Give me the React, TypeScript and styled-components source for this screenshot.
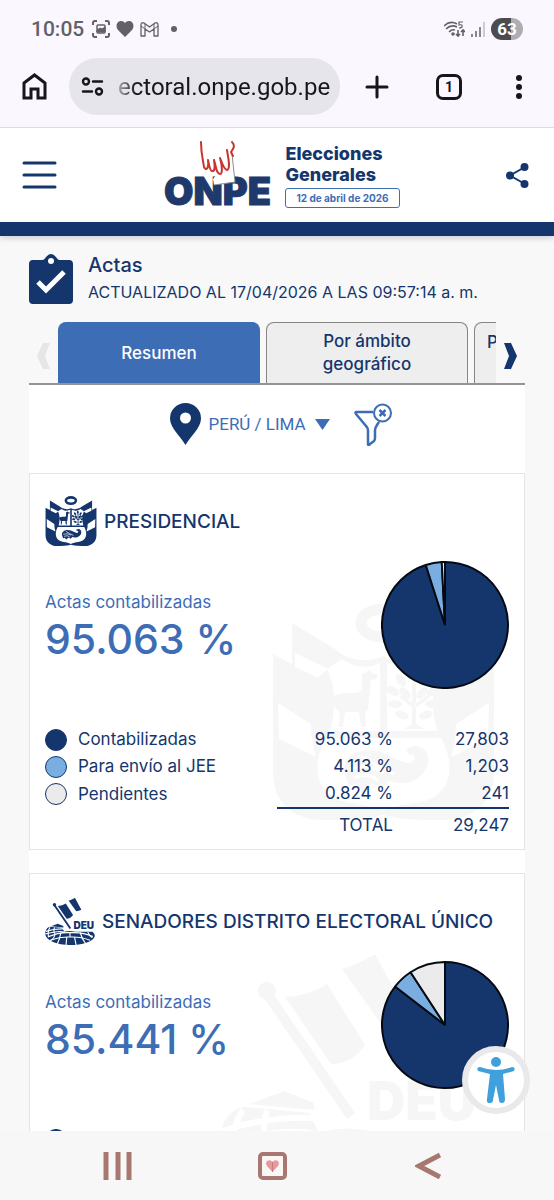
import { ReactNode } from 'react';
import styled, { createGlobalStyle } from 'styled-components';

const NAVY = '#14366d';
const BLUE = '#3d6db5';
const SKY = '#7aaee0';
const GREY = '#ebebeb';
const GHOST = '#f6f6f6';

const GlobalStyle = createGlobalStyle`
	* {
		box-sizing: border-box;
	}
	body {
		margin: 0;
		background: #f8f8f8;
		color: ${NAVY};
		font-family: Inter, 'Open Sans', sans-serif;
	}
	button,
	input,
	select {
		font: inherit;
		color: inherit;
	}
	svg {
		display: block;
		flex: none;
	}
`;

const Screen = styled.div`
	height: 100vh;
	display: flex;
	flex-direction: column;
`;

const Chrome = styled.div`
	flex: none;
	background: #faf7fe;
	border-bottom: 1px solid #dddbe1;
`;

const StatusBar = styled.div`
	height: 58px;
	padding: 0 31px;
	display: flex;
	align-items: center;
	justify-content: space-between;
	color: #626166;
`;

const StatusGroup = styled.div`
	display: flex;
	align-items: center;
	gap: 6px;
`;

const Clock = styled.span`
	margin-right: 2px;
	font: 500 21px Roboto, sans-serif;
`;

const Battery = styled.span`
	width: 32px;
	height: 22px;
	border-radius: 11px;
	background: linear-gradient(90deg, #4c4b50 62%, #aeadb2 62%);
	color: #fff;
	font: 700 17px/22px Roboto, sans-serif;
	text-align: center;
`;

const AddressBar = styled.div`
	height: 69px;
	padding: 0 24px 12px 22px;
	display: flex;
	align-items: center;
	color: #17161b;
`;

const IconButton = styled.button`
	padding: 0;
	border: 0;
	background: none;
	display: flex;
	align-items: center;
	justify-content: center;
	cursor: pointer;
`;

const UrlPill = styled.label`
	flex: 1;
	min-width: 0;
	height: 57px;
	margin: 0 24px 0 22px;
	padding: 0 10px 0 12px;
	border-radius: 29px;
	background: #e6e5eb;
	display: flex;
	align-items: center;
	gap: 14px;
`;

const UrlInput = styled.input`
	flex: 1;
	min-width: 0;
	padding: 0;
	border: 0;
	outline: 0;
	background: none;
	font: 400 24px Roboto, sans-serif;
	mask-image: linear-gradient(90deg, rgba(0, 0, 0, 0.3), #000 18px);
`;

const BrowserActions = styled.div`
	display: flex;
	align-items: center;
	gap: 46px;
`;

const TabCount = styled.button`
	width: 26px;
	height: 26px;
	padding: 0;
	border: 3px solid currentColor;
	border-radius: 7px;
	background: none;
	font: 700 14px/20px Roboto, sans-serif;
`;

const Viewport = styled.div`
	position: relative;
	flex: 1;
	min-height: 0;
	overflow: hidden;
`;

const SiteHeader = styled.header`
	height: 108px;
	padding: 0 25px 0 22px;
	border-bottom: 14px solid ${NAVY};
	background: #fff;
	box-shadow: 0 2px 6px rgba(20, 40, 90, 0.2);
	display: flex;
	align-items: center;
	justify-content: space-between;
`;

const Brand = styled.div`
	display: flex;
	align-items: center;
	gap: 12px;
`;

const Election = styled.div`
	font-size: 18px;
	font-weight: 800;
	line-height: 21px;
`;

const ElectionDate = styled.div`
	margin-top: 3px;
	padding: 0 10px;
	border: 1px solid ${BLUE};
	border-radius: 3px;
	color: ${BLUE};
	font-size: 10px;
	font-weight: 700;
	line-height: 18px;
`;

const Content = styled.main`
	padding: 15px 29px 0;
`;

const PageTitle = styled.div`
	display: flex;
	align-items: center;
	gap: 15px;
	h1 {
		margin: 0;
		font-size: 20px;
		font-weight: 500;
		line-height: 28px;
	}
	p {
		margin: 0;
		font-size: 16px;
		line-height: 27px;
	}
`;

const TabStrip = styled.div`
	margin-top: 16px;
	border-bottom: 2px solid #949494;
	display: flex;
`;

const TabArrow = styled(IconButton)`
	width: 29px;
	padding-top: 6px;
`;

const TabList = styled.div`
	flex: 1;
	min-width: 0;
	overflow: hidden;
	display: flex;
	gap: 6px;
`;

const Tab = styled.button<{ $active?: boolean; $cut?: boolean }>`
	flex: none;
	width: 202px;
	height: 61px;
	padding: ${({ $cut }) => ($cut ? '8px 12px' : '0 40px')};
	border: 1px solid ${({ $active }) => ($active ? BLUE : '#858585')};
	border-bottom: 0;
	border-radius: 8px 8px 0 0;
	background: ${({ $active }) => ($active ? BLUE : '#eee')};
	color: ${({ $active }) => ($active ? '#fff' : NAVY)};
	display: flex;
	align-items: ${({ $cut }) => ($cut ? 'flex-start' : 'center')};
	justify-content: ${({ $cut }) => ($cut ? 'flex-start' : 'center')};
	font-size: 17px;
	font-weight: 500;
	line-height: 23px;
`;

const Panel = styled.div`
	background: #fff;
`;

const Filters = styled.div`
	height: 88px;
	padding: 0 0 10px 8px;
	display: flex;
	align-items: center;
	justify-content: center;
`;

const Place = styled.label`
	display: flex;
	align-items: center;
	gap: 8px;
	color: ${BLUE};
	margin-right: 24px;
`;

const PlaceSelect = styled.select`
	appearance: none;
	padding: 0;
	border: 0;
	background: none;
	font: 400 17px Roboto, sans-serif;
`;

const Card = styled.section`
	position: relative;
	min-height: 377px;
	margin-bottom: 23px;
	padding: 22px 15px 10px;
	border: 1px solid #e4e4e6;
	background: #fff;
	overflow: hidden;
`;

const Watermark = styled.div<{ $top: number; $right: number }>`
	position: absolute;
	top: ${({ $top }) => $top}px;
	right: ${({ $right }) => $right}px;
`;

const CardBody = styled.div`
	position: relative;
`;

const CardTitle = styled.h2`
	height: 50px;
	margin: 0;
	display: flex;
	align-items: center;
	gap: 7px;
	font-size: 19px;
	font-weight: 500;
	white-space: nowrap;
`;

const Summary = styled.div`
	margin-top: 15px;
	display: flex;
	align-items: center;
	justify-content: space-between;
`;

const Progress = styled.div`
	color: ${BLUE};
	font-size: 17px;
	line-height: 28px;
	strong {
		display: block;
		font-size: 41px;
		font-weight: 500;
		line-height: 46px;
	}
`;

const Results = styled.table`
	width: 100%;
	margin-top: 37px;
	border-collapse: collapse;
	font-size: 17px;
	line-height: 27px;
	th,
	td {
		padding: 0;
		font-weight: 400;
		text-align: right;
	}
	th:first-child {
		width: 50%;
		text-align: left;
	}
	td:last-child {
		width: 25%;
	}
	tfoot td {
		padding-top: 3px;
		border-top: 2px solid ${NAVY};
	}
`;

const Legend = styled.span`
	height: 27px;
	display: flex;
	align-items: center;
	gap: 11px;
`;

const Dot = styled.i<{ $color: string }>`
	width: 22px;
	height: 22px;
	border: 1px solid ${NAVY};
	border-radius: 50%;
	background: ${({ $color }) => $color};
`;

const AccessButton = styled.button`
	position: absolute;
	right: 24px;
	bottom: 17px;
	width: 68px;
	height: 68px;
	padding: 0;
	border: 6px solid #e9e9eb;
	border-radius: 50%;
	background: #fff;
	display: flex;
	align-items: center;
	justify-content: center;
`;

const SystemNav = styled.nav`
	position: relative;
	flex: none;
	height: 69px;
	padding: 0 48px 0 40px;
	background: #f7f7f7;
	display: grid;
	grid-template-columns: repeat(3, 1fr);
`;

type EmblemProps = { width: number; height: number; color: string };

/* Peruvian coat of arms between two pairs of flags */
function Crest({ width, height, color }: EmblemProps) {
	const bands = (
		<>
			<path d="M23 50 56 66 46 75 23 64Z" />
			<path d="M6 100 39 121Q39 138 44 154L7 136Z" />
		</>
	);
	return (
		<svg width={width} height={height} viewBox="0 0 223 217" fill={color} aria-hidden="true">
			<ellipse cx="111" cy="20" rx="22" ry="14" fill="none" stroke={color} strokeWidth="11" />
			<path d="M1 51 20 61V20L63 46C72 55 94 62 111 53 128 62 150 55 159 46L203 20V61L222 51V170C222 198 202 217 172 217 150 217 130 217 111 212 92 217 72 217 50 217 21 217 1 198 1 170Z" />
			<g fill="#fff">
				{bands}
				<g transform="matrix(-1 0 0 1 223 0)">{bands}</g>
				<path d="M55 66 70 56C84 66 98 65 108 60V128H58C64 105 64 84 55 66Z" />
				<path d="M168 66 153 56C139 66 125 65 115 60V128H165C159 105 159 84 168 66Z" />
				<path d="M54 135H169C186 165 178 196 143 200 130 202 120 204 111 208 102 204 92 202 80 200 45 196 37 165 54 135Z" />
			</g>
			<path d="M90 71 98 67 100 70 106 72 105 76 99 77 96 107 93 109 94 124H89L87 109H73L71 124H67L68 109 64 106 60 98 63 92 72 90H86L90 87Z" />
			<path d="M140 76h4v45l8 5h-20l8-5ZM141 105l-14-11 2-2 13 9ZM144 105l14-11-2-2-13 9Z" />
			{[
				[141, 70, 0], [129, 77, -35], [153, 77, 35], [121, 88, -60], [161, 88, 60],
				[133, 90, -45], [150, 90, 45], [123, 101, -90], [160, 101, 90], [130, 112, -70], [154, 112, 70],
			].map(([x, y, angle]) => (
				<ellipse key={`${x}-${y}`} cx={x} cy={y} rx="4" ry="7" transform={`rotate(${angle} ${x} ${y})`} />
			))}
			<path d="M72 168C72 150 92 143 111 150 124 155 134 163 140 159 146 155 141 149 137 152L134 147C143 138 158 145 156 158 154 177 133 184 117 178L110 186 101 180 91 189 84 181 77 183Z" />
			<path d="M78 166Q96 160 112 170M82 175Q96 168 106 178M89 153Q102 162 122 171" fill="none" stroke="#fff" strokeWidth="3" />
		</svg>
	);
}

/* Senate chamber with a flag and the DEU initials */
function Senate({ width, height, color }: EmblemProps) {
	return (
		<svg width={width} height={height} viewBox="0 0 262 248" fill={color} aria-hidden="true">
			<path d="M0 190C2 164 15 153 27 152L91 158 101 178Q128 169 160 178H250Q262 188 262 200C254 232 195 248 131 248 63 248 5 226 0 190Z" />
			<path d="M32 149Q62 138 66 136L96 148V155Z" />
			<g fill="none" stroke="#fff" strokeWidth="6">
				<path d="M4 176Q48 161 98 163M0 190Q76 169 104 181M14 205Q76 179 131 183 199 179 252 203M28 223Q80 203 131 206 188 203 237 223" />
				<path d="M25 155Q11 176 18 205M49 155Q42 177 52 190M52 190Q49 214 25 226M83 183Q77 216 64 243M131 181V206M114 206 110 248M155 206 163 248M185 182Q193 215 213 240M225 180Q231 198 249 210" />
			</g>
			<circle cx="49" cy="36" r="9" />
			<path d="M50 40 133 161" stroke={color} strokeWidth="10" />
			<path d="M67 42Q91 41 109 29L147 90Q134 109 113 109Z" />
			<path d="M124 14Q143 8 157-1L191 62Q178 69 164 70Z" />
			<text x="149" y="165" fontFamily="Inter, sans-serif" fontSize="53" fontWeight="900">DEU</text>
		</svg>
	);
}

function Logo() {
	return (
		<svg width="110" height="82" viewBox="-1 -8 110 82" role="img" aria-label="ONPE">
			<text x="0" y="63" fill="#20396c" stroke="#20396c" strokeWidth="1" fontFamily="Inter, sans-serif" fontSize="38" fontWeight="900">ONPE</text>
			<path d="M49 37 68 14 71 40 50 43Z" fill="#fff" />
			<path d="M68 12 71 40 50 43" fill="none" stroke="#888f93" />
			<path
				d="M37 0C37 12 39 18 40 25 42 29 45 27 44 18 45 23 46 29 48 29 51 30 51 24 50 18 52 23 52 32 56 32 59 32 58 23 56 16 58 21 60 28 63 28 67 27 64 15 63 8M68 0C72 4 69 7 67 10L69 14"
				fill="none"
				stroke="#cb332e"
				strokeWidth="2"
				strokeLinecap="round"
				strokeLinejoin="round"
			/>
		</svg>
	);
}

const slicePoint = (percent: number) => {
	const angle = (percent / 100) * Math.PI * 2;
	return `${64 + 64 * Math.sin(angle)} ${64 - 64 * Math.cos(angle)}`;
};

function Pie({ values }: { values: number[] }) {
	const colors = [NAVY, SKY, GREY];
	return (
		<svg width="128" height="128" viewBox="-1 -1 130 130" stroke="#050a12" strokeWidth="2" strokeLinejoin="bevel" role="img" aria-label="Actas contabilizadas">
			{values.map((value, i) => {
				const start = values.slice(0, i).reduce((sum, v) => sum + v, 0);
				return (
					<path
						key={colors[i]}
						fill={colors[i]}
						d={`M64 64 L${slicePoint(start)} A64 64 0 ${value > 50 ? 1 : 0} 1 ${slicePoint(start + value)} Z`}
					/>
				);
			})}
		</svg>
	);
}

type Row = { color: string; label?: string; percent?: string; count?: string };

type ResultCardProps = {
	title: string;
	emblem: ReactNode;
	watermark: ReactNode;
	progress: string;
	values: number[];
	rows: Row[];
	total?: string;
};

function ResultCard({ title, emblem, watermark, progress, values, rows, total }: ResultCardProps) {
	return (
		<Card>
			{watermark}
			<CardBody>
				<CardTitle>
					{emblem}
					{title}
				</CardTitle>
				<Summary>
					<Progress>
						Actas contabilizadas
						<strong>{progress}</strong>
					</Progress>
					<Pie values={values} />
				</Summary>
				<Results>
					<tbody>
						{rows.map(({ color, label, percent, count }) => (
							<tr key={color}>
								<th scope="row">
									<Legend>
										<Dot $color={color} />
										{label}
									</Legend>
								</th>
								<td>{percent}</td>
								<td>{count}</td>
							</tr>
						))}
					</tbody>
					{total && (
						<tfoot>
							<tr>
								<th />
								<td>TOTAL</td>
								<td>{total}</td>
							</tr>
						</tfoot>
					)}
				</Results>
			</CardBody>
		</Card>
	);
}

export default function App() {
	return (
		<Screen>
			<GlobalStyle />
			<Chrome>
				<StatusBar>
					<StatusGroup>
						<Clock>10:05</Clock>
						<svg width="18" height="18" viewBox="0 0 18 18" fill="none" stroke="currentColor" strokeWidth="2">
							<path d="M1 5V3Q1 1 3 1H5M13 1H15Q17 1 17 3V5M17 13V15Q17 17 15 17H13M5 17H3Q1 17 1 15V13" />
							<rect x="5" y="5" width="8" height="8" rx="1" strokeWidth="1.500" />
							<path d="M5 12V10L8 8 10 9 13 7V12Z" fill="currentColor" strokeWidth="1" />
						</svg>
						<svg width="18" height="17" viewBox="0 0 18 17" fill="currentColor">
							<path d="M9 16 2 9C-1 5 1 0 5 0Q8 0 9 2 10 0 13 0C17 0 19 5 16 9Z" />
						</svg>
						<svg width="19" height="15" viewBox="0 0 19 15" fill="none" stroke="currentColor" strokeLinejoin="round">
							<path d="M1 14V3Q1 0 4 1L9.500 5 15 1Q18 0 18 3V14H14V7L9.500 10 5 7V14Z" strokeWidth="1.300" />
							<path d="M1 4 5 7V2M18 4 14 7V2" />
						</svg>
						<svg width="18" height="6" viewBox="0 0 18 6" fill="currentColor">
							<circle cx="9" cy="3" r="3" />
						</svg>
					</StatusGroup>
					<StatusGroup>
						<svg width="21" height="17" viewBox="0 0 21 17" fill="none" stroke="currentColor" strokeWidth="1.600">
							<path d="M0 5Q6-1 13 3M2 8Q7 3 13 6M5 11Q8 8 11 9M14 9V15M12 13 14 15 16 13M19 15V9M17 11 19 9 21 11" />
							<path d="M19 1H15V4Q19 3 18 6 17 7 15 7" strokeWidth="1.200" />
							<circle cx="9" cy="13" r="1" fill="currentColor" />
						</svg>
						<svg width="14" height="15" viewBox="0 0 14 15" fill="none" stroke="currentColor" strokeWidth="1.500">
							<path d="M1 15V12M5 15V9M9 15V5" />
							<path d="M13 15V0" stroke="#bdbcc2" />
						</svg>
						<Battery>63</Battery>
					</StatusGroup>
				</StatusBar>
				<AddressBar>
					<IconButton aria-label="Inicio">
						<svg width="25" height="27" viewBox="0 0 25 27" fill="none" stroke="currentColor" strokeWidth="3">
							<path d="M2 10 12.500 2 23 10V25H16V16H9V25H2Z" />
						</svg>
					</IconButton>
					<UrlPill>
						<svg width="23" height="19" viewBox="0 0 23 19" fill="none" stroke="currentColor" strokeWidth="2.400" strokeLinecap="round">
							<circle cx="5" cy="4.500" r="3" />
							<circle cx="18" cy="14.500" r="3" />
							<path d="M12 4.500H21M2 14.500H11" />
						</svg>
						<UrlInput aria-label="URL" defaultValue="ectoral.onpe.gob.pe" />
					</UrlPill>
					<BrowserActions>
						<IconButton aria-label="Nueva">
							<svg width="26" height="24" viewBox="0 0 26 24" stroke="currentColor" strokeWidth="3" strokeLinecap="round">
								<path d="M13 2V22M3 12H23" />
							</svg>
						</IconButton>
						<TabCount>1</TabCount>
						<IconButton aria-label="Más">
							<svg width="22" height="24" viewBox="0 0 22 24" fill="currentColor">
								<circle cx="11" cy="3" r="3" />
								<circle cx="11" cy="12" r="3" />
								<circle cx="11" cy="21" r="3" />
							</svg>
						</IconButton>
					</BrowserActions>
				</AddressBar>
			</Chrome>

			<Viewport>
				<SiteHeader>
					<IconButton aria-label="Menú">
						<svg width="35" height="30" viewBox="0 0 35 30" stroke={NAVY} strokeWidth="3" strokeLinecap="round">
							<path d="M2 3H33M2 15H33M2 27H33" />
						</svg>
					</IconButton>
					<Brand>
						<Logo />
						<div>
							<Election>
								Elecciones
								<br />
								Generales
							</Election>
							<ElectionDate>12 de abril de 2026</ElectionDate>
						</div>
					</Brand>
					<IconButton aria-label="Compartir">
						<svg width="23" height="25" viewBox="0 0 23 25" fill={NAVY} stroke={NAVY} strokeWidth="2">
							<path d="M19 4 4 12.500 19 21" fill="none" />
							<circle cx="18.500" cy="4" r="3" />
							<circle cx="4" cy="12.500" r="3" />
							<circle cx="18.500" cy="21" r="3" />
						</svg>
					</IconButton>
				</SiteHeader>

				<Content>
					<PageTitle>
						<svg width="44" height="50" viewBox="0 0 44 50">
							<path d="M4 6H14Q16 5 17 3 22-3 27 3 28 5 30 6H40Q44 6 44 10V46Q44 50 40 50H4Q0 50 0 46V10Q0 6 4 6Z" fill={NAVY} />
							<circle cx="22" cy="7" r="3" fill="#fff" />
							<path d="M9 28 17 36 35 18" fill="none" stroke="#fff" strokeWidth="5" />
						</svg>
						<div>
							<h1>Actas</h1>
							<p>ACTUALIZADO AL 17/04/2026 A LAS 09:57:14 a. m.</p>
						</div>
					</PageTitle>

					<TabStrip>
						<TabArrow aria-label="Anterior">
							<svg width="13" height="26" viewBox="0 0 13 26" fill="#e6e6e6">
								<path d="M6 0H13L8 13 13 26H6L0 13Z" />
							</svg>
						</TabArrow>
						<TabList role="tablist">
							<Tab role="tab" aria-selected="true" $active>Resumen</Tab>
							<Tab role="tab" aria-selected="false">Por ámbito geográfico</Tab>
							<Tab role="tab" aria-selected="false" $cut>P</Tab>
						</TabList>
						<TabArrow aria-label="Siguiente">
							<svg width="13" height="26" viewBox="0 0 13 26" fill={NAVY}>
								<path d="M0 0H7L13 13 7 26H0L5 13Z" />
							</svg>
						</TabArrow>
					</TabStrip>

					<Panel>
						<Filters>
							<Place>
								<svg width="31" height="42" viewBox="0 0 31 42">
									<path d="M15.500 42C11 34 0 25 0 15.500A15.500 15.500 0 0 1 31 15.500C31 25 20 34 15.500 42Z" fill={NAVY} />
									<circle cx="15.500" cy="15" r="5.500" fill="#fff" />
								</svg>
								<PlaceSelect aria-label="Ámbito">
									<option>PERÚ / LIMA</option>
								</PlaceSelect>
								<svg width="15" height="11" viewBox="0 0 15 11" fill={BLUE}>
									<path d="M0 0H15L7.500 11Z" />
								</svg>
							</Place>
							<IconButton aria-label="Quitar filtro">
								<svg width="39" height="43" viewBox="0 0 39 43" fill="none" stroke={BLUE} strokeWidth="2.500" strokeLinejoin="round">
									<path d="M19 9H2Q1 9 2 11L12 23Q14 25 14 27V41Q14 43 16 41L20 38Q21 37 21 35V27Q21 25 23 22L25 19" />
									<circle cx="28.500" cy="10" r="8.500" strokeWidth="2" />
									<path d="M25.500 7 31.500 13M31.500 7 25.500 13" />
								</svg>
							</IconButton>
						</Filters>

						<ResultCard
							title="PRESIDENCIAL"
							emblem={<Crest width={52} height={50} color={NAVY} />}
							watermark={
								<Watermark $top={129} $right={29}>
									<Crest width={223} height={217} color={GHOST} />
								</Watermark>
							}
							progress="95.063 %"
							values={[95.063, 4.113, 0.824]}
							rows={[
								{ color: NAVY, label: 'Contabilizadas', percent: '95.063 %', count: '27,803' },
								{ color: SKY, label: 'Para envío al JEE', percent: '4.113 %', count: '1,203' },
								{ color: GREY, label: 'Pendientes', percent: '0.824 %', count: '241' },
							]}
							total="29,247"
						/>
						<ResultCard
							title="SENADORES DISTRITO ELECTORAL ÚNICO"
							emblem={<Senate width={50} height={47} color={NAVY} />}
							watermark={
								<Watermark $top={81} $right={44}>
									<Senate width={262} height={248} color={GHOST} />
								</Watermark>
							}
							progress="85.441 %"
							values={[85.441, 5.359, 9.2]}
							rows={[{ color: NAVY }]}
						/>
					</Panel>
				</Content>

				<AccessButton aria-label="Accesibilidad">
					<svg width="38" height="46" viewBox="0 0 38 46" fill="#3fa0dc">
						<circle cx="19" cy="5" r="5" />
						<path d="M3 10Q19 16 35 10 39 10 37 14L26 17 28 42Q28 46 25 46 22 46 22 43L19 28 16 43Q16 46 13 46 9 46 10 42L13 17 1 14Q-1 10 3 10Z" />
					</svg>
				</AccessButton>
			</Viewport>

			<SystemNav>
				<IconButton aria-label="Recientes">
					<svg width="30" height="28" viewBox="0 0 30 28" stroke="#a87870" strokeWidth="5">
						<path d="M3 0V28M15 0V28M26 0V28" />
					</svg>
				</IconButton>
				<IconButton aria-label="Pantalla principal">
					<svg width="29" height="28" viewBox="0 0 29 28">
						<rect x="2" y="2" width="25" height="24" rx="3" fill="#fbf6f6" stroke="#a87870" strokeWidth="4" />
						<path d="M14.500 20 9 14C6 10 11 6 14.500 10 18 6 23 10 20 14Z" fill="#e79a9c" />
						<path d="M14.500 10V20" stroke="#c9797c" />
					</svg>
				</IconButton>
				<IconButton aria-label="Atrás">
					<svg width="26" height="28" viewBox="0 0 26 28" fill="none" stroke="#a87870" strokeWidth="5">
						<path d="M25 3 4 14 25 25" />
					</svg>
				</IconButton>
			</SystemNav>
		</Screen>
	);
}
